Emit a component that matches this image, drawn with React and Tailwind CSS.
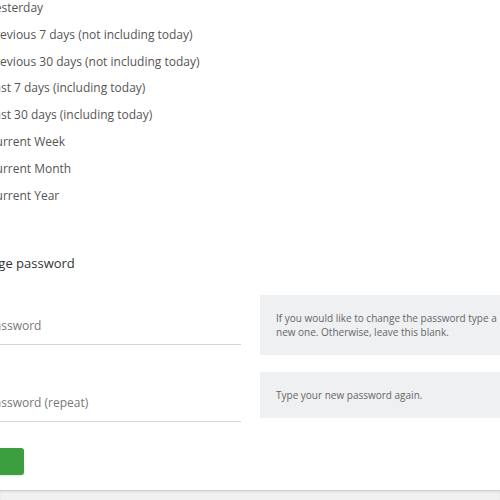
export default function App() {
  const ranges = [
    'Yesterday',
    'Previous 7 days (not including today)',
    'Previous 30 days (not including today)',
    'Last 7 days (including today)',
    'Last 30 days (including today)',
    'Current Week',
    'Current Month',
    'Current Year'
  ]

  return (
    <div className="w-[500px] h-[500px] overflow-hidden bg-white flex flex-col font-['Open_Sans',sans-serif]">
      <div className="flex-1 flex flex-col -ml-[50px]">
        {/* Date range options */}
        <ul className="-mt-[6px] ml-[38px] flex flex-col">
          {ranges.map((r) => (
            <li key={r} className="h-[26.8px] leading-[27px] text-[12px] text-[#555]">
              {r}
            </li>
          ))}
        </ul>

        <h3 className="mt-[43px] ml-[17px] text-[13px] leading-[24px] text-[#333]">Change password</h3>

        <div className="mt-[20px] grid grid-cols-[291px_262px] gap-x-[19px] items-start">
          <input
            type="password"
            placeholder="New password"
            className="mt-[12px] h-[38px] pl-[9px] pr-3 text-[12px] border-b border-[#d4d4d4] outline-none placeholder:text-[#777]"
          />
          <div className="h-[60px] bg-[#eff0f2] px-4 flex items-center text-[10px] leading-[14px] text-[#666]">
            If you would like to change the password type a new one. Otherwise, leave this blank.
          </div>
        </div>

        <div className="mt-[17px] grid grid-cols-[291px_262px] gap-x-[19px] items-start">
          <input
            type="password"
            placeholder="New password (repeat)"
            className="mt-[12px] h-[38px] pl-[9px] pr-3 text-[12px] border-b border-[#d4d4d4] outline-none placeholder:text-[#777]"
          />
          <div className="h-[46px] bg-[#eff0f2] px-4 flex items-center text-[10px] text-[#666]">
            Type your new password again.
          </div>
        </div>

        <button className="mt-[26px] -ml-[30px] w-[104px] h-[27px] rounded-[3px] bg-[#3c9f3f] shadow-sm text-white text-[12px]">
          Save
        </button>
      </div>

      <div className="h-[10px] bg-[#f1f1f1] border-t border-[#d2d2d2] shadow-[inset_0_1px_2px_rgba(0,0,0,0.08)]" />
    </div>
  )
}
